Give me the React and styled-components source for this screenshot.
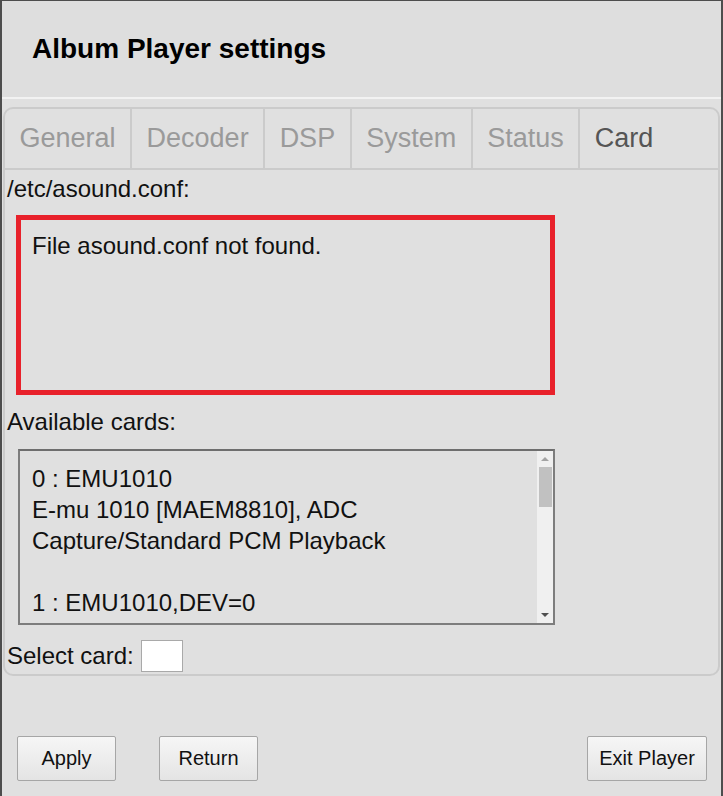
import React from 'react';
import styled, { createGlobalStyle } from 'styled-components';

const GlobalStyle = createGlobalStyle`
  html, body {
    margin: 0;
    padding: 0;
    background: #e0e0e0;
  }
  body {
    font-family: "Liberation Sans", Arial, sans-serif;
    color: #111;
  }
`;

const Frame = styled.div`
  width: 723px;
  height: 796px;
  box-sizing: border-box;
  border-left: 2px solid #4d4d4d;
  border-right: 2px solid #4d4d4d;
  border-top: 1px solid #4d4d4d;
  background: #e0e0e0;
  display: flex;
  flex-direction: column;
`;

const Header = styled.header`
  height: 96px;
  display: flex;
  align-items: center;
  padding-left: 30px;
  background: #dedede;
  border-bottom: 2px solid #f2f2f2;
`;

const Title = styled.h1`
  margin: 0;
  font-size: 28px;
  font-weight: bold;
  color: #000;
`;

const Panel = styled.section`
  margin: 8px 1px 0 1px;
  border: 2px solid #cbcbcb;
  border-radius: 10px;
  padding-bottom: 2px;
`;

const TabBar = styled.nav`
  display: flex;
  height: 59px;
  border-bottom: 2px solid #cbcbcb;
`;

const Tab = styled.div`
  display: flex;
  align-items: center;
  padding: 0 14.5px;
  font-size: 27px;
  color: ${p => (p.$active ? '#555' : '#9a9a9a')};
  border-right: ${p => (p.$active ? 'none' : '2px solid #cbcbcb')};
`;

const Content = styled.div`
  padding: 0 2px;
`;

const Label = styled.div`
  font-size: 24px;
  line-height: 28px;
  margin-top: ${p => p.$top || 0}px;
`;

const ErrorBox = styled.div`
  width: 539px;
  height: 180px;
  margin: 12px 0 0 9px;
  border: 5px solid #e8212b;
  padding: 12px 11px;
  box-sizing: border-box;
  font-size: 24px;
  line-height: 28px;
`;

const CardList = styled.div`
  display: flex;
  width: 537px;
  height: 176px;
  box-sizing: border-box;
  margin: 13px 0 0 11px;
  border: 2px solid #7d7d7d;
  border-top-color: #6e6e6e;
`;

const CardText = styled.div`
  flex: 1;
  overflow: hidden;
  padding: 12px 12px 0 12px;
  font-size: 24px;
  line-height: 31px;
  white-space: pre-line;
`;

const ScrollBar = styled.div`
  width: 16px;
  background: #f0f0f0;
  display: flex;
  flex-direction: column;
  align-items: center;
`;

const ArrowBox = styled.div`
  height: 16px;
  width: 16px;
  display: flex;
  align-items: center;
  justify-content: center;
`;

const Arrow = styled.span`
  width: 0;
  height: 0;
  border-left: 4px solid transparent;
  border-right: 4px solid transparent;
  ${p =>
    p.$down
      ? 'border-top: 4px solid #505050;'
      : 'border-bottom: 4px solid #a3a3a3;'}
`;

const Thumb = styled.div`
  width: 13px;
  height: 40px;
  margin-left: 1px;
  background: #c1c1c1;
`;

const Spacer = styled.div`
  flex: 1;
`;

const SelectRow = styled.div`
  display: flex;
  align-items: center;
  gap: 7px;
  margin-top: 15px;
  font-size: 24px;
`;

const CardInput = styled.input`
  width: 42px;
  height: 32px;
  box-sizing: border-box;
  border: 1px solid #a9a9a9;
  background: #fff;
  padding: 0 4px;
  font-size: 20px;
  font-family: inherit;
`;

const Footer = styled.footer`
  margin-top: auto;
  display: flex;
  align-items: center;
  padding: 0 14px 15px 15px;
`;

const Button = styled.button`
  height: 45px;
  width: ${p => p.$w}px;
  margin-right: ${p => p.$gap || 0}px;
  margin-left: ${p => (p.$push ? 'auto' : '0')};
  box-sizing: border-box;
  border: 1px solid #a6a6a6;
  border-radius: 2px;
  background: linear-gradient(#f6f6f6, #e4e4e4);
  font-family: "Liberation Sans", Arial, sans-serif;
  font-size: 20px;
  color: #111;
  padding: 0;
`;

const tabs = ['General', 'Decoder', 'DSP', 'System', 'Status', 'Card'];

const cards = `0 : EMU1010
E-mu 1010 [MAEM8810], ADC
Capture/Standard PCM Playback

1 : EMU1010,DEV=0`;

export default function App() {
  return (
    <>
      <GlobalStyle />
      <Frame>
        <Header>
          <Title>Album Player settings</Title>
        </Header>
        <Panel>
          <TabBar>
            {tabs.map(t => (
              <Tab key={t} $active={t === 'Card'}>{t}</Tab>
            ))}
          </TabBar>
          <Content>
            <Label $top={5}>/etc/asound.conf:</Label>
            <ErrorBox>File asound.conf not found.</ErrorBox>
            <Label $top={13}>Available cards:</Label>
            <CardList>
              <CardText>{cards}</CardText>
              <ScrollBar>
                <ArrowBox><Arrow /></ArrowBox>
                <Thumb />
                <Spacer />
                <ArrowBox><Arrow $down /></ArrowBox>
              </ScrollBar>
            </CardList>
            <SelectRow>
              Select card:
              <CardInput type="text" />
            </SelectRow>
          </Content>
        </Panel>
        <Footer>
          <Button $w={99} $gap={43}>Apply</Button>
          <Button $w={99}>Return</Button>
          <Button $w={120} $push>Exit Player</Button>
        </Footer>
      </Frame>
    </>
  );
}
